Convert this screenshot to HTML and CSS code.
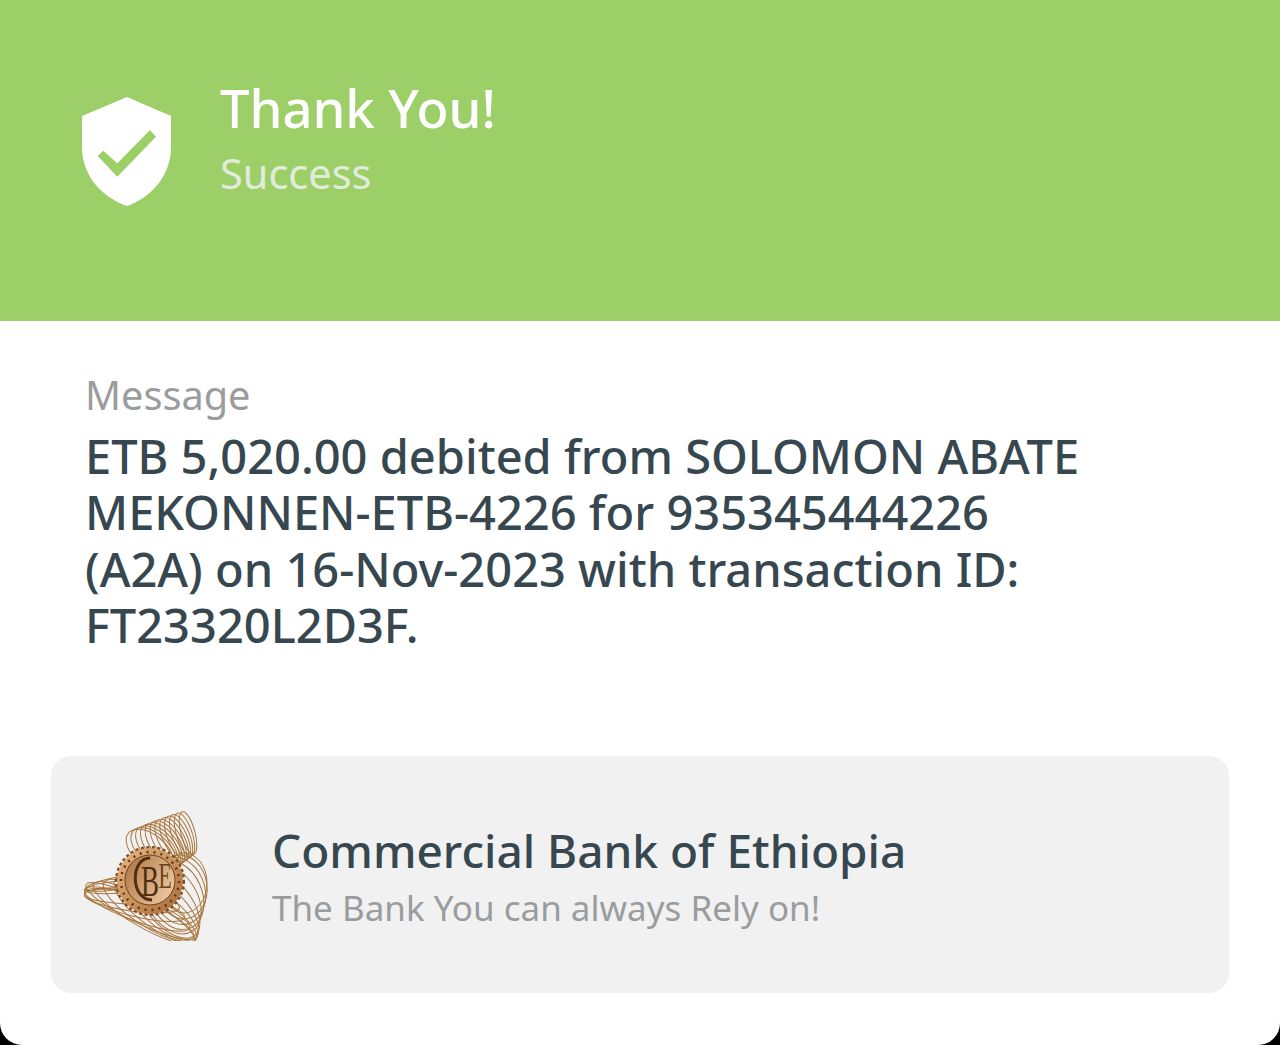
FILE: index.html
```
<!DOCTYPE html>
<html lang="en">
<head>
<meta charset="utf-8">
<title>Thank You</title>
<link rel="stylesheet" href="styles.css">
</head>
<body>
<main class="sheet">
  <header class="hero">
    <svg class="shield" viewBox="0 0 89 109" aria-hidden="true">
      <path class="shield-body" d="M45 0 L89 19 V50 C89 78 70 100 45 109 C19 100 0 78 0 50 V19 Z"/>
      <path class="shield-check" d="M15.7 59 L21.3 53.7 L35.3 66.3 L68 33 L74 39.7 L35.3 79.7 Z"/>
    </svg>
    <div class="hero-text">
      <h1 class="hero-title">Thank You!</h1>
      <p class="hero-sub">Success</p>
    </div>
  </header>
  <section class="message">
    <p class="message-label">Message</p>
    <p class="message-body">ETB 5,020.00 debited from SOLOMON ABATE<br>MEKONNEN-ETB-4226 for 935345444226<br>(A2A) on 16-Nov-2023 with transaction ID:<br>FT23320L2D3F.</p>
  </section>
  <section class="bank">
    <svg class="logo" viewBox="0 0 126 130" aria-hidden="true">
      <defs>
        <linearGradient id="coinFill" x1="0" y1="0" x2="1" y2="1">
          <stop offset="0" stop-color="#e6b683"/>
          <stop offset="0.55" stop-color="#c98f58"/>
          <stop offset="1" stop-color="#a56b38"/>
        </linearGradient>
        <linearGradient id="innerFill" x1="0" y1="0" x2="1" y2="0.6">
          <stop offset="0" stop-color="#a9733f"/>
          <stop offset="1" stop-color="#eac49a"/>
        </linearGradient>
      </defs>
      <g class="coil">
        <ellipse cx="66" cy="40" rx="16" ry="28" transform="rotate(-50 66 40)"/>
        <ellipse cx="69.5" cy="38.4" rx="15.2" ry="27.5" transform="rotate(-46.8 69.5 38.4)"/>
        <ellipse cx="72.9" cy="36.7" rx="14.4" ry="26.9" transform="rotate(-43.6 72.9 36.7)"/>
        <ellipse cx="76.4" cy="35.1" rx="13.5" ry="26.4" transform="rotate(-40.5 76.4 35.1)"/>
        <ellipse cx="79.8" cy="33.5" rx="12.7" ry="25.8" transform="rotate(-37.3 79.8 33.5)"/>
        <ellipse cx="83.3" cy="31.8" rx="11.9" ry="25.3" transform="rotate(-34.1 83.3 31.8)"/>
        <ellipse cx="86.7" cy="30.2" rx="11.1" ry="24.7" transform="rotate(-30.9 86.7 30.2)"/>
        <ellipse cx="90.2" cy="28.5" rx="10.3" ry="24.2" transform="rotate(-27.7 90.2 28.5)"/>
        <ellipse cx="93.6" cy="26.9" rx="9.5" ry="23.6" transform="rotate(-24.5 93.6 26.9)"/>
        <ellipse cx="97.1" cy="25.3" rx="8.6" ry="23.1" transform="rotate(-21.4 97.1 25.3)"/>
        <ellipse cx="100.5" cy="23.6" rx="7.8" ry="22.5" transform="rotate(-18.2 100.5 23.6)"/>
        <ellipse cx="104" cy="22" rx="7" ry="22" transform="rotate(-15 104 22)"/>
        <ellipse cx="35" cy="72" rx="34" ry="6" transform="rotate(-10 35 72)"/>
        <ellipse cx="35" cy="76" rx="34" ry="6" transform="rotate(-5 35 76)"/>
        <ellipse cx="45" cy="85" rx="45" ry="8" transform="rotate(2 45 85)"/>
        <ellipse cx="48" cy="90" rx="48" ry="10" transform="rotate(8 48 90)"/>
        <ellipse cx="50" cy="94" rx="52" ry="11" transform="rotate(14 50 94)"/>
        <ellipse cx="53" cy="98" rx="56" ry="12" transform="rotate(20 53 98)"/>
        <ellipse cx="56" cy="100" rx="60" ry="12" transform="rotate(26 56 100)"/>
        <ellipse cx="60" cy="102" rx="58" ry="14" transform="rotate(30 60 102)"/>
        <ellipse cx="66" cy="100" rx="54" ry="16" transform="rotate(32 66 100)"/>
        <ellipse cx="72" cy="98" rx="50" ry="18" transform="rotate(36 72 98)"/>
        <ellipse cx="78" cy="95" rx="46" ry="20" transform="rotate(42 78 95)"/>
        <ellipse cx="84" cy="92" rx="42" ry="22" transform="rotate(50 84 92)"/>
        <ellipse cx="88" cy="88" rx="38" ry="25" transform="rotate(58 88 88)"/>
        <ellipse cx="92" cy="84" rx="36" ry="26" transform="rotate(66 92 84)"/>
        <ellipse cx="95" cy="80" rx="34" ry="26" transform="rotate(74 95 80)"/>
        <ellipse cx="98" cy="76" rx="32" ry="25" transform="rotate(82 98 76)"/>
        <ellipse cx="100" cy="72" rx="30" ry="23" transform="rotate(90 100 72)"/>
      </g>
      <circle class="coin-edge" cx="66" cy="70" r="33.5"/>
      <circle class="coin" cx="66" cy="70" r="33" fill="url(#coinFill)"/>
      <circle class="coin-glyphs" cx="66" cy="70" r="29"/>
      <circle class="coin-inner" cx="66" cy="69" r="25" fill="url(#innerFill)"/>
      <path class="coin-c" d="M66 47 C46 47 46 89 68 89"/>
      <text class="coin-letter" transform="translate(66 85) scale(0.6 1)">B</text>
      <text class="coin-letter coin-letter-e" transform="translate(81 77) scale(0.6 1)">E</text>
    </svg>
    <div class="bank-text">
      <h2 class="bank-name">Commercial Bank of Ethiopia</h2>
      <p class="bank-tag">The Bank You can always Rely on!</p>
    </div>
  </section>
</main>
</body>
</html>
```

FILE: styles.css
```
html, body {
  margin: 0;
  padding: 0;
  background: #000;
}
body {
  font-family: "Noto Sans", "Open Sans", sans-serif;
}
.sheet {
  width: 1280px;
  height: 1045px;
  box-sizing: border-box;
  background: #fff;
  border-radius: 0 0 22px 22px;
  overflow: hidden;
}
.hero {
  height: 321px;
  box-sizing: border-box;
  background: #9dcf69;
  display: flex;
  align-items: flex-start;
  gap: 49px;
  padding: 78px 0 0 82px;
}
.shield {
  width: 89px;
  height: 109px;
  margin-top: 19px;
  flex: none;
}
.shield-body { fill: #fff; }
.shield-check { fill: #9dcf69; }
.hero-title {
  margin: 0;
  font-size: 52.5px;
  line-height: 60px;
  font-weight: 500;
  color: #fff;
}
.hero-sub {
  margin: 10px 0 0;
  font-size: 41.5px;
  line-height: 50px;
  font-weight: 400;
  color: #e3ebdc;
}
.message {
  padding: 46px 0 0 85px;
  height: 435px;
  box-sizing: border-box;
}
.message-label {
  margin: 0;
  font-size: 39.7px;
  line-height: 56px;
  color: #9a9c9d;
}
.message-body {
  margin: 5px 0 0;
  font-size: 47px;
  line-height: 56.3px;
  font-weight: 500;
  color: #37474f;
  white-space: nowrap;
}
.bank {
  margin: 0 51px;
  height: 237px;
  background: #f1f1f2;
  border-radius: 20px;
  display: flex;
  align-items: center;
  gap: 62px;
  padding-left: 33px;
}
.logo {
  width: 126px;
  height: 130px;
  flex: none;
  margin-top: 3px;
}
.coil ellipse {
  fill: none;
  stroke: #a8763c;
  stroke-width: 1;
}
.coin-edge {
  fill: none;
  stroke: #7a4c24;
  stroke-width: 3;
  stroke-dasharray: 3 2.5;
}
.coin-glyphs {
  fill: none;
  stroke: #5d3718;
  stroke-width: 2.5;
  stroke-dasharray: 2 5;
}
.coin-inner {
  stroke: #6d4320;
  stroke-width: 1;
}
.coin-letter {
  font-family: "Liberation Serif", serif;
  font-size: 45px;
  fill: #4f2e14;
  text-anchor: middle;
}
.coin-letter-e {
  font-size: 36px;
  fill: #6d4320;
}
.coin-c {
  fill: none;
  stroke: #4f2e14;
  stroke-width: 3;
}
.bank-text { min-width: 0; margin-top: 5px; }
.bank-name {
  margin: 0;
  font-size: 46px;
  line-height: 56px;
  font-weight: 500;
  color: #37474f;
}
.bank-tag {
  margin: 5px 0 0;
  font-size: 35px;
  line-height: 50px;
  font-weight: 400;
  color: #9a9c9d;
}
```
